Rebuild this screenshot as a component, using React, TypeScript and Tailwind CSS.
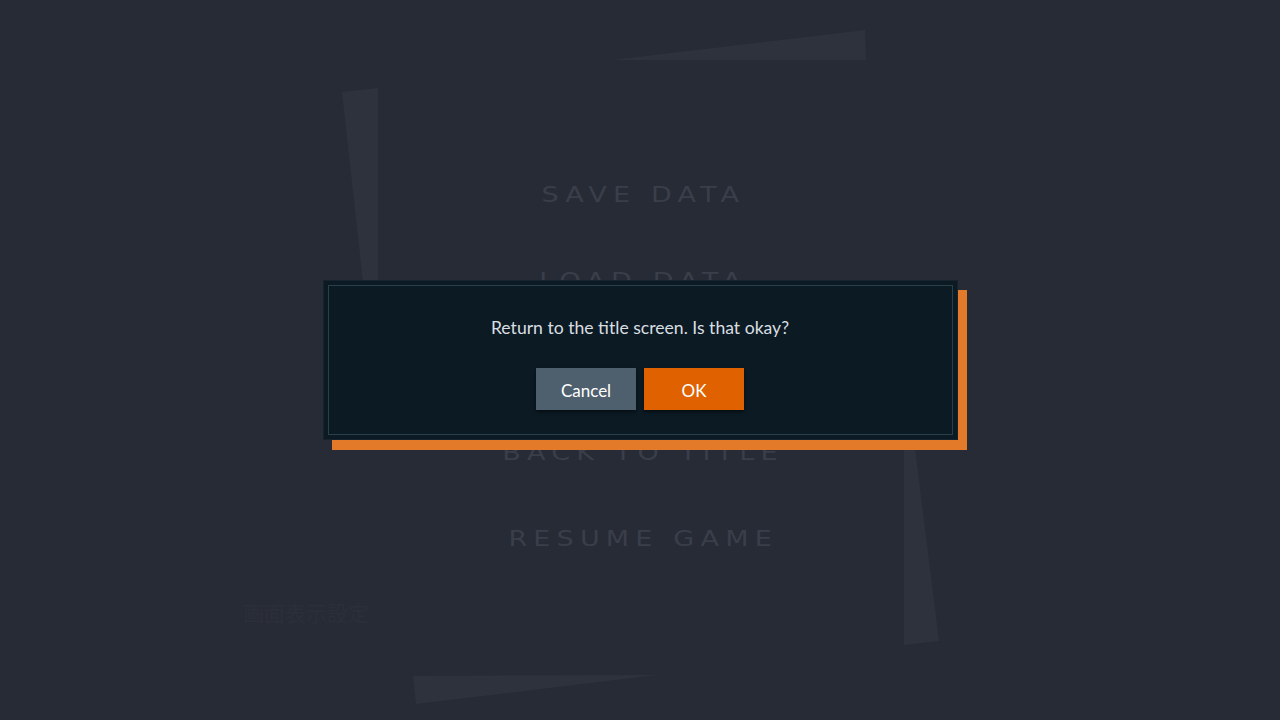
import React from "react";

const menu = ["SAVE DATA", "LOAD DATA", "SYSTEM", "BACK TO TITLE", "RESUME GAME"];

export default function App() {
  return (
    <div className="relative w-[1280px] h-[720px] overflow-hidden bg-[#272b35]">
      <svg className="absolute inset-0" width="1280" height="720" viewBox="0 0 1280 720">
        <polygon points="612,60 865,30 866,60" fill="#2e323c" />
        <polygon points="342,92 378,88 378,300 365,300" fill="#2e323c" />
        <polygon points="904,440 914,440 939,641 904,645" fill="#2e323c" />
        <polygon points="413,676 657,675 416,704" fill="#2e323c" />
      </svg>

      <div className="relative flex flex-col items-center pt-[180px] gap-[56px]">
        {menu.map((m) => (
          <div
            key={m}
            className="h-[30px] leading-[30px] text-[22px] tracking-[5px] pl-[5px] text-[#393e4a] scale-x-[1.23]"
            style={{ fontFamily: '"DejaVu Sans", sans-serif' }}
          >
            {m}
          </div>
        ))}
      </div>

      <div
        className="absolute left-[243px] top-[599px] text-[21px] leading-[26px] text-[#2b2f3a]"
        style={{ fontFamily: '"Noto Sans CJK JP", sans-serif' }}
      >
        画面表示設定
      </div>

      <div className="absolute inset-0 flex items-center justify-center">
        <div className="w-[635px] h-[160px] bg-[#0c1a23] border border-[#16232c] shadow-[9px_10px_0_#e27a2a] p-[4px]">
          <div
            className="h-full border border-[#2a3f4a] flex flex-col items-center"
            style={{ fontFamily: 'Lato, "Noto Sans", sans-serif' }}
          >
            <div className="mt-[31px] text-[17.6px] leading-[22px] text-[#d9dee2]">
              Return to the title screen. Is that okay?
            </div>
            <div className="mt-[29px] flex gap-[8px]">
              <button className="w-[100px] h-[42px] pt-[3px] bg-[#4e5f6d] text-white text-[17px] shadow-[0_2px_3px_rgba(0,0,0,0.5)]">
                Cancel
              </button>
              <button className="w-[100px] h-[42px] pt-[3px] bg-[#e06100] text-white text-[17px] shadow-[0_2px_3px_rgba(0,0,0,0.5)]">
                OK
              </button>
            </div>
          </div>
        </div>
      </div>
    </div>
  );
}
